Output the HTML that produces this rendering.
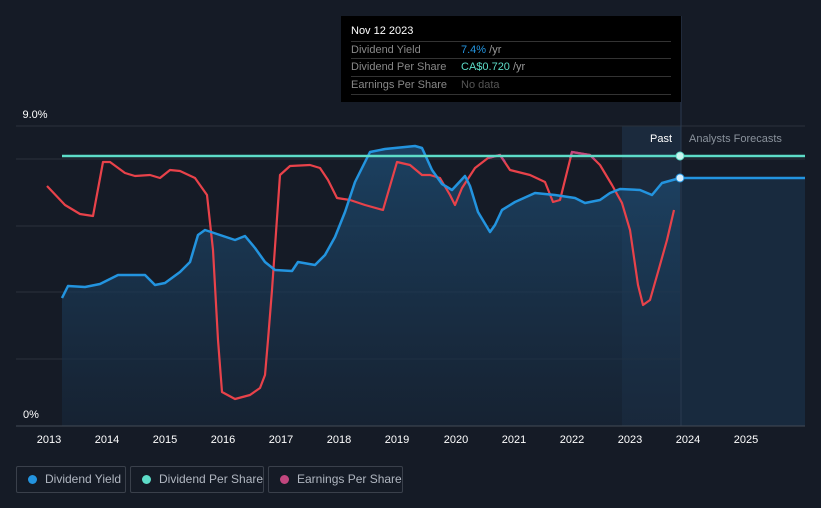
<!DOCTYPE html><html><head><style>
body{margin:0;background:#151b26;width:821px;height:508px;overflow:hidden;font-family:"Liberation Sans",sans-serif}
.t{position:absolute;left:341px;top:16px;width:340px;height:86px;background:#000;color:#fff;font-size:11px}
.r{position:absolute;left:10px;width:320px;border-top:1px solid #333;height:17px;line-height:17px;color:#888}
.lg{position:absolute;top:466px;height:27px;border:1px solid #3a404b;border-radius:2px;color:#b0b6c0;font-size:12px;line-height:25px;box-sizing:border-box;padding-left:28px;white-space:nowrap}
.lg i{position:absolute;left:11px;top:8px;width:9px;height:9px;border-radius:50%}
</style></head><body>
<svg width="821" height="508" style="position:absolute;left:0;top:0">
<defs><linearGradient id="g" x1="0" y1="0" x2="0" y2="1"><stop offset="0" stop-color="#1d4a70" stop-opacity=".8"/><stop offset="1" stop-color="#17273a" stop-opacity=".6"/></linearGradient></defs>
<rect x="622" y="126" width="59" height="300" fill="#1b2a3d"/>
<g stroke="#2a313c" stroke-width="1"><line x1="16" y1="126" x2="805" y2="126"/><line x1="16" y1="159" x2="805" y2="159"/><line x1="16" y1="226" x2="805" y2="226"/><line x1="16" y1="292" x2="805" y2="292"/><line x1="16" y1="359" x2="805" y2="359"/></g>
<path d="M62,298 L68,286 85,287 100,284 118,275 145,275 155,285 165,283 180,272 190,262 198,235 205,230 220,235 235,240 245,236 255,248 265,262 275,270 292,271 298,262 315,265 325,255 335,237 345,212 355,182 370,152 385,149 415,146 422,148 432,170 442,184 452,190 465,176 470,186 478,212 490,232 495,225 502,210 515,202 535,193 555,195 575,198 585,203 600,200 610,193 620,189 640,190 652,195 662,183 680,178 L680,426 L62,426Z" fill="url(#g)"/>
<path d="M680,178 L805,178 805,426 680,426Z" fill="#182a3e"/>
<line x1="681" y1="16" x2="681" y2="426" stroke="#2a3a50"/>
<path d="M47,186 L65,205 80,214 93,216 103,162 110,162 125,173 135,176 150,175 160,178 170,170 180,171 195,178 207,195 213,250 218,340 222,392 235,399 250,395 260,388 265,375 268,340 272,290 280,175 290,166 310,165 320,168 328,180 337,198 350,200 365,205 383,210 397,162 410,165 422,175 430,175 440,178 450,195 455,205 462,188 475,168 488,158 500,155 510,170 530,175 545,182 553,202 560,200 572,152 590,155 600,165 612,185 622,203 630,230 638,285 643,305 650,300 658,272 667,240 674,210" fill="none" stroke="#e8424a" stroke-width="2.2" stroke-linejoin="round"/>
<path d="M488,158 L500,155 505,162" fill="none" stroke="#c2467e" stroke-width="2.2"/>
<path d="M570,158 L572,152 590,155 595,160" fill="none" stroke="#c2467e" stroke-width="2.2"/>
<path d="M62,298 L68,286 85,287 100,284 118,275 145,275 155,285 165,283 180,272 190,262 198,235 205,230 220,235 235,240 245,236 255,248 265,262 275,270 292,271 298,262 315,265 325,255 335,237 345,212 355,182 370,152 385,149 415,146 422,148 432,170 442,184 452,190 465,176 470,186 478,212 490,232 495,225 502,210 515,202 535,193 555,195 575,198 585,203 600,200 610,193 620,189 640,190 652,195 662,183 680,178 805,178" fill="none" stroke="#2394df" stroke-width="2.5" stroke-linejoin="round"/>
<line x1="62" y1="156" x2="805" y2="156" stroke="#5ddcc8" stroke-width="2.5"/>
<circle cx="680" cy="156" r="4" fill="#c8f4ee" stroke="#5ddcc8"/>
<circle cx="680" cy="178" r="4" fill="#d8eefc" stroke="#2394df"/>
<line x1="16" y1="426" x2="805" y2="426" stroke="#444b56"/>
<g fill="#fff" font-size="11" text-anchor="middle" font-family="Liberation Sans">
<text x="49" y="443">2013</text><text x="107" y="443">2014</text><text x="165" y="443">2015</text><text x="223" y="443">2016</text><text x="281" y="443">2017</text><text x="339" y="443">2018</text><text x="397" y="443">2019</text><text x="456" y="443">2020</text><text x="514" y="443">2021</text><text x="572" y="443">2022</text><text x="630" y="443">2023</text><text x="688" y="443">2024</text><text x="746" y="443">2025</text>
<text x="35" y="118">9.0%</text><text x="31" y="418">0%</text>
<text x="661" y="142">Past</text></g>
<text x="689" y="142" fill="#8a929c" font-size="11" font-family="Liberation Sans">Analysts Forecasts</text>
</svg>
<div class="t"><div style="position:absolute;left:10px;top:9px;font-size:11px">Nov 12 2023</div>
<div class="r" style="top:25px">Dividend Yield<span style="position:absolute;left:110px;color:#2394df">7.4% <span style="color:#999">/yr</span></span></div>
<div class="r" style="top:42px">Dividend Per Share<span style="position:absolute;left:110px;color:#5ddcc8">CA$0.720 <span style="color:#999">/yr</span></span></div>
<div class="r" style="top:60px;border-bottom:1px solid #333">Earnings Per Share<span style="position:absolute;left:110px;color:#555">No data</span></div></div>
<div class="lg" style="left:16px;width:110px"><i style="background:#2394df"></i>Dividend Yield</div>
<div class="lg" style="left:130px;width:134px"><i style="background:#5ddcc8"></i>Dividend Per Share</div>
<div class="lg" style="left:268px;width:135px"><i style="background:#c2467e"></i>Earnings Per Share</div>
</body></html>
